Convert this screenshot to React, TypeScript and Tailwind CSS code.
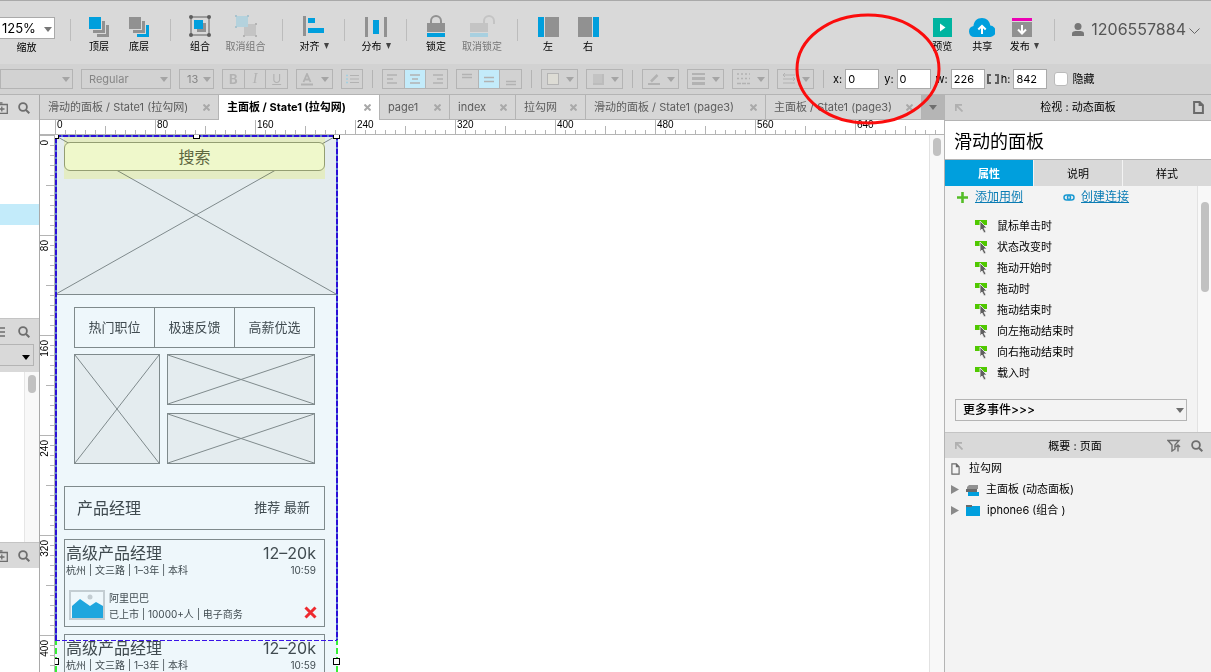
/**
 * Prototype editor workspace
 */
import type { ReactNode } from 'react';
import clsx from 'clsx';

const INK = '#919191';
const BLUE = '#009fdd';

/* ---------- shared bits ---------- */

function Caret({ className }: { className?: string }) {
  return (
    <svg width="8" height="5" viewBox="0 0 8 5" preserveAspectRatio="none" className={className} aria-hidden="true">
      <path d="M0 0h8L4 5z" fill="currentColor" />
    </svg>
  );
}

function SearchIcon() {
  return (
    <svg width="12" height="12" viewBox="0 0 12 12" aria-hidden="true">
      <circle cx="5" cy="5" r="3.9" fill="none" stroke="#6e6e6e" strokeWidth="1.8" />
      <path d="M8 8l3.3 3.3" stroke="#6e6e6e" strokeWidth="2" />
    </svg>
  );
}

function AddFolderIcon() {
  return (
    <svg width="8" height="12" viewBox="0 0 8 12" aria-hidden="true">
      <path d="M0 .8h2.5M0 2.5h7.3v8.8H0M0 7h4.5M1.8 4.5v5" fill="none" stroke="#6e6e6e" strokeWidth="1.3" />
    </svg>
  );
}

function CornerArrow() {
  return (
    <svg width="8" height="8" viewBox="0 0 8 8" aria-hidden="true">
      <path d="M.8 7V.8H7M1 1l6.5 6.5" fill="none" stroke="#b0b0b0" strokeWidth="1.8" />
    </svg>
  );
}

function FileIcon({ width, height, stroke }: { width: number; height: number; stroke: number }) {
  return (
    <svg width={width} height={height} viewBox="0 0 10 13" preserveAspectRatio="none" aria-hidden="true">
      <path d="M1 1h5l3 3v8H1zM6 1v3h3" fill="none" stroke="#6a6a6a" strokeWidth={stroke} />
    </svg>
  );
}

/* ---------- main toolbar ---------- */

function ToolButton({
  label,
  width,
  icon,
  muted,
  menu,
}: {
  label: string;
  width: string;
  icon: ReactNode;
  muted?: boolean;
  menu?: boolean;
}) {
  return (
    <button type="button" className={clsx('flex shrink-0 flex-col items-center whitespace-nowrap', width)}>
      <span className="flex h-[25px] items-end">{icon}</span>
      <span className={clsx('mt-px flex h-4 items-center gap-1 text-[10px] leading-4', muted ? 'text-[#777]' : 'text-black')}>
        {label}
        {menu && <Caret className="h-[6px] w-[5px] text-[#444]" />}
      </span>
    </button>
  );
}

function ToolDivider({ width }: { width: string }) {
  return (
    <div className={clsx('flex shrink-0 justify-center', width)}>
      <div className="mt-[7px] h-[22px] w-px bg-[#bcbcbc]" />
    </div>
  );
}

function LayersIcon({ front, back }: { front: string; back: string }) {
  return (
    <svg width="20" height="20" viewBox="0 0 20 20">
      <path d="M0 0h12v12H0z" fill={front} />
      <path d="M13 4h3v12H4v-3h9z" fill={INK} />
      <path d="M17 8h3v12H8v-3h9z" fill={back} />
    </svg>
  );
}

const groupIcon = (
  <svg width="22" height="22" viewBox="0 0 22 22">
    <path d="M2 2h18v18H2z" fill="none" stroke="#5e5e5e" />
    <path d="M8 8h9v9H8z" fill={INK} />
    <path d="M5 5h9v9H5z" fill={BLUE} />
    <g fill="#5e5e5e">
      <circle cx="2" cy="2" r="2" />
      <circle cx="20" cy="2" r="2" />
      <circle cx="2" cy="20" r="2" />
      <circle cx="20" cy="20" r="2" />
    </g>
  </svg>
);

const ungroupIcon = (
  <svg width="22" height="22" viewBox="0 0 22 22">
    <path d="M9 9h12v12H9z" fill="#c4c4c4" />
    <path d="M1 1h12v11H1z" fill="#b4d2dd" />
    <path d="M0 0h2v2H0zM12 0h2v2h-2zM0 11h2v2H0z" fill="#a9c3cd" />
    <path d="M20 8h2v2h-2zM8 20h2v2H8zM20 20h2v2h-2z" fill="#b3b3b3" />
  </svg>
);

const alignIcon = (
  <svg width="22" height="21" viewBox="0 0 22 21">
    <path d="M0 0h3v20H0z" fill={INK} />
    <path d="M5 2h7v5H5zM5 12h16v5H5z" fill={BLUE} />
  </svg>
);

const distributeIcon = (
  <svg width="22" height="20" viewBox="0 0 22 20">
    <path d="M0 0h3v20H0zM19 0h3v20h-3z" fill={INK} />
    <path d="M8 3h6v14H8z" fill={BLUE} />
  </svg>
);

const lockIcon = (
  <svg width="18" height="22" viewBox="0 0 18 22">
    <path d="M4 9V6a5 5 0 0 1 10 0v3" fill="none" stroke={INK} strokeWidth="2" />
    <path d="M0 8h18v9H0z" fill={INK} />
    <path d="M0 18h18v4H0z" fill={BLUE} />
  </svg>
);

const unlockIcon = (
  <svg width="25" height="22" viewBox="0 0 25 22">
    <path d="M14 9V6a5 5 0 0 1 10 0v3" fill="none" stroke="#c4c4c4" strokeWidth="2" />
    <path d="M0 8h18v9H0z" fill="#c4c4c4" />
    <path d="M0 18h18v4H0z" fill="#a8d0e0" />
  </svg>
);

function MainToolbar() {
  return (
    <div className="flex h-16 shrink-0 border-t border-[#a9a9a9] bg-[#d9d9d9] pt-[11px]">
      <div className="w-[60px] shrink-0">
        <div className="relative mt-[5px] h-[22px] w-[55px]">
          <select
            id="zoom"
            className="block h-full w-full appearance-none border border-l-0 border-[#aaa] bg-white pl-0.5 text-[13px] leading-5"
          >
            <option>125%</option>
          </select>
          <Caret className="pointer-events-none absolute top-[10px] right-[3px] text-[#777]" />
        </div>
        <label htmlFor="zoom" className="block w-[53px] text-center text-[10px] leading-4">
          缩放
        </label>
      </div>
      <ToolDivider width="w-5" />
      <ToolButton label="顶层" width="w-[38px]" icon={<LayersIcon front={BLUE} back={INK} />} />
      <ToolButton label="底层" width="w-[42px]" icon={<LayersIcon front={INK} back={BLUE} />} />
      <ToolDivider width="w-5" />
      <ToolButton label="组合" width="w-10" icon={groupIcon} />
      <ToolButton label="取消组合" width="w-[51px]" icon={ungroupIcon} muted />
      <ToolDivider width="w-[23px]" />
      <ToolButton label="对齐" width="w-10" icon={alignIcon} menu />
      <ToolDivider width="w-5" />
      <ToolButton label="分布" width="w-11" icon={distributeIcon} menu />
      <ToolDivider width="w-4" />
      <ToolButton label="锁定" width="w-11" icon={lockIcon} />
      <ToolButton label="取消锁定" width="w-12" icon={unlockIcon} muted />
      <ToolDivider width="w-[22px]" />
      <ToolButton
        label="左"
        width="w-10"
        icon={
          <svg width="21" height="20" viewBox="0 0 21 20">
            <path d="M0 0h6v20H0z" fill={BLUE} />
            <path d="M7 0h14v20H7z" fill={INK} />
          </svg>
        }
      />
      <ToolButton
        label="右"
        width="w-10"
        icon={
          <svg width="21" height="20" viewBox="0 0 21 20">
            <path d="M15 0h6v20h-6z" fill={BLUE} />
            <path d="M0 0h14v20H0z" fill={INK} />
          </svg>
        }
      />

      <div className="ml-auto flex">
        <ToolButton
          label="预览"
          width="w-10"
          icon={
            <svg width="19" height="19" viewBox="0 0 19 19">
              <path d="M0 0h19v19H0z" fill="#00b4a0" />
              <path d="M7 5.5l5.5 4L7 13.5z" fill="#fff" />
            </svg>
          }
        />
        <ToolButton
          label="共享"
          width="w-10"
          icon={
            <svg width="26" height="19" viewBox="0 0 26 19">
              <path d="M5.5 19a5.5 5.5 0 0 1-1-10.9C4.6 3.5 8 0 13 0c4.4 0 7.8 3 8.300 7.600A5.700 5.700 0 0 1 20.500 19z" fill={BLUE} />
              <path d="M13 16V8.500M9.300 11.500L13 7.800l3.700 3.700" fill="none" stroke="#fff" strokeWidth="2" />
            </svg>
          }
        />
        <ToolButton
          label="发布"
          width="w-11"
          menu
          icon={
            <svg width="20" height="19" viewBox="0 0 20 19" className="mr-1">
              <path d="M0 0h20v3H0z" fill="#ec00b4" />
              <path d="M0 4h20v15H0z" fill={INK} />
              <path d="M10 7v8M6 11.500l4 4 4-4" fill="none" stroke="#fff" strokeWidth="2" />
            </svg>
          }
        />
        <ToolDivider width="w-4" />
        <button type="button" className="mr-[11px] ml-2.5 flex h-[34px] items-center text-base text-[#555]">
          <svg width="12" height="13" viewBox="0 0 12 13" className="mr-[7px]">
            <circle cx="6" cy="3.500" r="3.500" fill="#777" />
            <path d="M0 13v-2.500C0 8.500 2 8 6 8s6 .5 6 2.500V13z" fill="#777" />
          </svg>
          1206557884
          <svg width="11" height="6" viewBox="0 0 11 6" className="mt-1 ml-[3px]">
            <path d="M.5.5l5 5 5-5" fill="none" stroke="#666" />
          </svg>
        </button>
      </div>
    </div>
  );
}

/* ---------- format toolbar ---------- */

function FadedSelect({ label, value, width }: { label: string; value: string; width: string }) {
  return (
    <div className={clsx('relative h-5 shrink-0', width)}>
      <select
        aria-label={label}
        className="block h-full w-full appearance-none border border-[#b4b4b4] pl-[7px] text-[11px] leading-4 text-[#858585]"
      >
        <option>{value}</option>
      </select>
      <Caret className="pointer-events-none absolute top-2 right-[3px] text-[#a5a5a5]" />
    </div>
  );
}

function MenuButton({ label, children }: { label: string; children: ReactNode }) {
  return (
    <button
      type="button"
      aria-label={label}
      className="flex h-5 w-[37px] shrink-0 items-center justify-between border border-[#b4b4b4] pr-[3px] pl-1 text-[#b2b2b2]"
    >
      {children}
      <Caret className="text-[#a5a5a5]" />
    </button>
  );
}

function Segment({ items, active }: { items: { label: string; icon: ReactNode }[]; active?: number }) {
  return (
    <div className="flex h-5 w-[66px] shrink-0 divide-x divide-[#b4b4b4] border border-[#b4b4b4] text-[#b2b2b2]">
      {items.map((item, i) => (
        <button
          key={item.label}
          type="button"
          aria-label={item.label}
          className={clsx('flex flex-1 items-center justify-center', i === active && 'bg-[#c3ebfa]')}
        >
          {item.icon}
        </button>
      ))}
    </div>
  );
}

function Strokes({ d }: { d: string }) {
  return (
    <svg width="14" height="14" viewBox="0 0 14 14" aria-hidden="true">
      <path d={d} fill="none" stroke="currentColor" strokeWidth="1.5" />
    </svg>
  );
}

function FormatDivider() {
  return <div className="mx-px h-[18px] w-px shrink-0 bg-[#b4b4b4]" />;
}

function Coordinate({ name, value }: { name: string; value: string }) {
  return (
    <label className="flex shrink-0 items-center gap-[3px] text-[11px]">
      {name}:
      <input defaultValue={value} className="h-5 w-[34px] border border-[#aaa] bg-white pl-0.5 text-[11px] outline-none" />
    </label>
  );
}

function FormatToolbar() {
  return (
    <div className="flex h-[31px] shrink-0 items-center gap-2 border-b border-[#b4b4b4] bg-[#d2d2d2]">
      <FadedSelect label="字体" value="" width="w-[73px]" />
      <FadedSelect label="字重" value="Regular" width="w-[90px]" />
      <FadedSelect label="字号" value="13" width="w-[35px]" />
      <Segment
        items={[
          { label: '粗体', icon: <span className="text-[13px] leading-4 font-bold">B</span> },
          { label: '斜体', icon: <span className="font-['Liberation_Serif',serif] text-sm leading-4 italic">I</span> },
          { label: '下划线', icon: <span className="text-xs leading-4 underline">U</span> },
        ]}
      />
      <MenuButton label="文字颜色">
        <svg width="13" height="13" viewBox="0 0 13 13">
          <path d="M2.500 9l3.500-8 3.500 8M4 6.500h4" fill="none" stroke="currentColor" strokeWidth="1.800" />
          <path d="M0 10.500h12v2H0z" fill="currentColor" />
        </svg>
      </MenuButton>
      <button
        type="button"
        aria-label="项目符号"
        className="flex h-5 w-[22px] shrink-0 items-center justify-center border border-[#b4b4b4] text-[#b2b2b2]"
      >
        <svg width="13" height="10" viewBox="0 0 13 10">
          <path d="M4 1.500h9M4 5h9M4 8.500h9" stroke="currentColor" />
          <path d="M0 1.500h2M0 5h2M0 8.500h2" stroke="#a3cfe0" strokeWidth="1.500" />
        </svg>
      </button>
      <FormatDivider />
      <Segment
        active={1}
        items={[
          { label: '左对齐', icon: <Strokes d="M1 3h10M1 7h6M1 11h10" /> },
          { label: '居中', icon: <Strokes d="M2 3h10M4 7h6M2 11h10" /> },
          { label: '右对齐', icon: <Strokes d="M3 3h10M7 7h6M3 11h10" /> },
        ]}
      />
      <Segment
        active={1}
        items={[
          { label: '顶部', icon: <Strokes d="M2 2.500h10M2 5.500h10" /> },
          { label: '中部', icon: <Strokes d="M2 5.500h10M2 9.500h10" /> },
          { label: '底部', icon: <Strokes d="M2 9.500h10M2 12.500h10" /> },
        ]}
      />
      <FormatDivider />
      <MenuButton label="填充">
        <span className="ml-px size-3 border border-[#b4b4b4] bg-[#dddcd5]" />
      </MenuButton>
      <MenuButton label="阴影">
        <span className="ml-0.5 size-[11px] border-r-2 border-b-2 border-[#bcbcbc] bg-[#c3c3c3]" />
      </MenuButton>
      <FormatDivider />
      <MenuButton label="线条颜色">
        <svg width="14" height="14" viewBox="0 0 14 14">
          <path d="M1 12h12" stroke="currentColor" strokeWidth="2" />
          <path d="M4 9.500L10.500 3" stroke="currentColor" strokeWidth="2.500" />
        </svg>
      </MenuButton>
      <MenuButton label="线宽">
        <svg width="13" height="12" viewBox="0 0 13 12">
          <path d="M0 0h13v2H0zM0 4h13v3H0zM0 9h13v3H0z" fill="currentColor" />
        </svg>
      </MenuButton>
      <MenuButton label="线型">
        <svg width="13" height="12" viewBox="0 0 13 12">
          <path d="M0 1h13M0 5.500h13" stroke="currentColor" strokeWidth="1.500" strokeDasharray="2 2" />
          <path d="M0 10.500h13" stroke="currentColor" strokeWidth="1.500" strokeDasharray="4 1" />
        </svg>
      </MenuButton>
      <MenuButton label="箭头">
        <svg width="14" height="14" viewBox="0 0 14 14">
          <path d="M1 3h12M1 7h12M1 11h12M3 1L1 3l2 2M11 5l2 2-2 2" fill="none" stroke="currentColor" />
        </svg>
      </MenuButton>
      <FormatDivider />
      <div className="flex items-center gap-[5px]">
        <Coordinate name="x" value="0" />
        <Coordinate name="y" value="0" />
        <Coordinate name="w" value="226" />
        <svg width="12" height="10" viewBox="0 0 12 10" className="-mx-[3px] shrink-0" aria-hidden="true">
          <path d="M4 1H1v8h3M8 1h3v8H8" fill="none" stroke="#5f5f5f" strokeWidth="2" />
        </svg>
        <Coordinate name="h" value="842" />
        <label className="ml-0.5 flex shrink-0 items-center gap-1 text-[11px]">
          <input type="checkbox" className="size-3.5 appearance-none rounded-[3px] border border-[#bbb] bg-white" />
          隐藏
        </label>
      </div>
    </div>
  );
}

/* ---------- left sidebar ---------- */

function LeftSidebar() {
  return (
    <aside className="flex w-10 shrink-0 flex-col border-r border-[#a9a9a9] bg-white">
      <div className="flex h-[25px] items-center gap-2.5 bg-[#d9d9d9]">
        <AddFolderIcon />
        <SearchIcon />
      </div>
      <div className="h-[198px]">
        <div className="mt-[84px] h-[21px] bg-[#c3ebfa]" />
      </div>
      <div className="h-[54px] border-t border-[#c4c4c4] bg-[#d9d9d9]">
        <div className="flex h-[25px] items-center gap-3">
          <svg width="6" height="10" viewBox="0 0 6 10" aria-hidden="true">
            <path d="M0 1h5M0 5h5M0 9h5" stroke="#6e6e6e" strokeWidth="1.500" />
          </svg>
          <SearchIcon />
        </div>
        <div className="relative h-[22px] w-[34px]">
          <select aria-label="元件库" className="block h-full w-full appearance-none border border-l-0 border-[#b4b4b4]">
            <option />
          </select>
          <Caret className="pointer-events-none absolute top-[11px] right-1 text-black" />
        </div>
      </div>
      <div className="flex h-[170px] justify-end">
        <div className="flex w-[15px] justify-center border-l border-[#e6e6e6] bg-[#f8f8f8] pt-[3px]">
          <div className="h-[18px] w-2 rounded-full bg-[#c1c1c1]" />
        </div>
      </div>
      <div className="flex h-[26px] items-center gap-2.5 border-t border-[#c4c4c4] bg-[#d9d9d9]">
        <AddFolderIcon />
        <SearchIcon />
      </div>
    </aside>
  );
}

/* ---------- document tabs and rulers ---------- */

const documents = [
  { title: '滑动的面板 / State1 (拉勾网)', width: 'w-[179px]' },
  { title: '主面板 / State1 (拉勾网)', width: 'w-[161px]', active: true },
  { title: 'page1', width: 'w-[70px]' },
  { title: 'index', width: 'w-[66px]' },
  { title: '拉勾网', width: 'w-[70px]' },
  { title: '滑动的面板 / State1 (page3)', width: 'w-[180px]' },
  { title: '主面板 / State1 (page3)', width: 'w-[156px]' },
];

function DocumentTabs() {
  return (
    <div className="flex h-[25px] shrink-0 overflow-hidden">
      {documents.map((doc) => (
        <button
          key={doc.title}
          type="button"
          className={clsx(
            'flex shrink-0 items-center justify-between border-r border-[#b4b4b4] pr-2 pl-2 text-[11px] whitespace-nowrap',
            doc.width,
            doc.active ? 'bg-white font-bold text-black' : 'border-b bg-[#d6d6d6] text-[#5c5c5c]',
          )}
        >
          {doc.title}
          <svg width="7" height="7" viewBox="0 0 7 7" aria-hidden="true">
            <path d="M.5.5l6 6M6.500.5l-6 6" stroke="#a9a9a9" strokeWidth="2" />
          </svg>
        </button>
      ))}
      <button type="button" aria-label="全部标签" className="flex flex-1 items-center justify-center bg-[#b5b5b5] text-[#6e6e6e]">
        <Caret />
      </button>
    </div>
  );
}

const steps = (count: number) => Array.from({ length: count }, (_, i) => i);
const RULER_FONT = "font-['Liberation_Sans',Arial,sans-serif] text-[10px]";

// ticks every 10px, 125% zoom makes 80 units out of 100px
function HorizontalRuler() {
  return (
    <svg height="15" className="block w-full shrink-0 bg-white" aria-hidden="true">
      {steps(89).map((i) => (
        <path
          key={i}
          d={`M${i * 10 + 15.5} ${i % 10 === 0 ? 0 : i % 5 === 0 ? 6 : 10}V15`}
          stroke="#b4b4b4"
        />
      ))}
      {steps(9).map((i) => (
        <text key={i} x={i * 100 + 17} y="8" className={RULER_FONT}>
          {i * 80}
        </text>
      ))}
      <path d="M0 14.500h2000" stroke="#b4b4b4" />
    </svg>
  );
}

function VerticalRuler() {
  return (
    <svg width="15" className="block h-full shrink-0 bg-white" aria-hidden="true">
      {steps(54).map((i) => (
        <path
          key={i}
          d={`M${i % 10 === 0 ? 0 : i % 5 === 0 ? 6 : 10} ${i * 10 + 0.5}H15`}
          stroke="#b4b4b4"
        />
      ))}
      {steps(6).map((i) => (
        <text
          key={i}
          transform={`translate(8 ${i * 100 + 5}) rotate(-90)`}
          textAnchor="end"
          className={RULER_FONT}
        >
          {i * 80}
        </text>
      ))}
      <path d="M14.500 0v2000" stroke="#b4b4b4" />
    </svg>
  );
}

/* ---------- canvas ---------- */

function Placeholder({ className }: { className: string }) {
  return (
    <svg className={clsx('absolute border border-[#7f8a8c] bg-[#e4ecef]', className)} aria-hidden="true">
      <line x1="0" y1="0" x2="100%" y2="100%" stroke="#7f8a8c" />
      <line x1="100%" y1="0" x2="0" y2="100%" stroke="#7f8a8c" />
    </svg>
  );
}

function Handle({ className }: { className: string }) {
  return <div className={clsx('absolute size-[7px] border border-black bg-white', className)} />;
}

function JobCard({ className }: { className: string }) {
  return (
    <div className={clsx('absolute left-[9px] h-[88px] w-[261px] border border-[#7f8a8c] pt-[3px] pr-2 pl-px', className)}>
      <div className="flex justify-between text-base leading-5">
        <span>高级产品经理</span>
        <span>12–20k</span>
      </div>
      <div className="flex justify-between text-[10px] leading-[14px]">
        <span>杭州 | 文三路 | 1–3年 | 本科</span>
        <span>10:59</span>
      </div>
      <div className="mt-[13px] flex text-[10px]">
        <svg width="36" height="30" viewBox="0 0 36 30" className="mr-1 ml-[3px]" aria-hidden="true">
          <path d="M1 1h34v28H1z" fill="#eef7fb" stroke="#c3cdd2" strokeWidth="2" />
          <circle cx="21" cy="7" r="2.500" fill="#c3cdd2" />
          <path d="M3 16l8-7 10 7 6-4 7 4v12H3z" fill="#1fa6de" />
        </svg>
        <div className="leading-4">
          <p>阿里巴巴</p>
          <p>已上市 | 10000+人 | 电子商务</p>
        </div>
        <svg width="13" height="13" viewBox="0 0 13 13" className="mt-4 -mr-px ml-auto" aria-hidden="true">
          <path d="M1.500 1.500l10 10M11.500 1.500l-10 10" stroke="#ee2a2f" strokeWidth="3" />
        </svg>
      </div>
    </div>
  );
}

function Canvas() {
  return (
    <div className="relative flex-1 overflow-hidden bg-white">
      <div className="absolute top-0 left-0 h-full w-[282px] bg-[#eef7fb] text-[#404b50]">
        <Placeholder className="top-0 left-0 h-[160px] w-[282px]" />
        <div className="absolute top-0.5 left-[9px] h-[42px] w-[261px] bg-[#ffffd0] mix-blend-multiply" />
        <div className="absolute top-[7px] left-[9px] flex h-[29px] w-[261px] items-center justify-center rounded-md border border-[#949e72] bg-[#eff8cb] text-base leading-5 text-[#5d663f]">
          搜索
        </div>

        <div className="absolute top-[172px] left-[19px] flex h-[41px] w-[241px] divide-x divide-[#7f8a8c] border border-[#7f8a8c] text-[13px]">
          {['热门职位', '极速反馈', '高薪优选'].map((name) => (
            <span key={name} className="flex flex-1 items-center justify-center">
              {name}
            </span>
          ))}
        </div>
        <Placeholder className="top-[219px] left-[19px] h-[110px] w-[86px]" />
        <Placeholder className="top-[219px] left-[112px] h-[51px] w-[148px]" />
        <Placeholder className="top-[278px] left-[112px] h-[51px] w-[148px]" />

        <div className="absolute top-[351px] left-[9px] flex h-11 w-[261px] items-center justify-between border border-[#7f8a8c] pr-3.5 pl-3">
          <span className="text-base leading-5">产品经理</span>
          <span className="text-[13px]">推荐 最新</span>
        </div>
        <JobCard className="top-[404px]" />
        <JobCard className="top-[499px]" />
      </div>

      {/* selection outlines */}
      <svg className="absolute top-0 left-0 h-full w-[290px]" aria-hidden="true">
        <path d="M1 0v1000M282 0v1000" stroke="#35f035" strokeWidth="2" strokeDasharray="6 3" />
        <path d="M1 505V1h281v504" fill="none" stroke="#5a7ad8" strokeWidth="2" />
        <path d="M1 505V1h281v504" fill="none" stroke="#2a10d8" strokeWidth="2" strokeDasharray="5 2" />
        <path d="M0 505.500h282" stroke="#3a12e8" strokeDasharray="5 2" />
      </svg>
      <Handle className="-top-[3px] -left-[3px]" />
      <Handle className="-top-[3px] left-[138px]" />
      <Handle className="-top-[3px] left-[278px]" />
      <Handle className="top-[523px] -left-[3px]" />
      <Handle className="top-[523px] left-[278px]" />
    </div>
  );
}

/* ---------- inspector ---------- */

const events = ['鼠标单击时', '状态改变时', '拖动开始时', '拖动时', '拖动结束时', '向左拖动结束时', '向右拖动结束时', '载入时'];

function EventIcon() {
  return (
    <svg width="13" height="13" viewBox="0 0 13 13" aria-hidden="true">
      <path d="M0 0h12v5H0z" fill="#50c800" />
      <path d="M5 1l7 7H9l2 4-2 1-2-4-2 2z" fill="#5f5f5f" stroke="#f3f3f3" strokeWidth=".8" />
    </svg>
  );
}

function Inspector() {
  return (
    <aside className="flex w-[267px] shrink-0 flex-col border-l border-[#b4b4b4] bg-[#f3f3f3] text-[11px]">
      <header className="flex h-[26px] shrink-0 items-center justify-between border-b border-[#b4b4b4] bg-[#d2d2d2] pr-[7px] pl-2.5">
        <CornerArrow />
        <h2>检视 : 动态面板</h2>
        <FileIcon width={11} height={13} stroke={1.8} />
      </header>
      <input
        aria-label="名称"
        defaultValue="滑动的面板"
        className="h-[39px] shrink-0 border-b border-[#b4b4b4] bg-white px-[9px] text-lg outline-none"
      />
      <div className="grid h-[26px] shrink-0 grid-cols-3 gap-px">
        {['属性', '说明', '样式'].map((name, i) => (
          <button
            key={name}
            type="button"
            className={clsx('pt-0.5', i === 0 ? 'bg-[#009fdd] font-semibold text-white' : 'bg-[#d9d9d9]')}
          >
            {name}
          </button>
        ))}
      </div>

      <div className="flex h-[246px] shrink-0">
        <div className="flex-1">
          <div className="flex h-[22px] items-center pl-3 text-xs text-[#0a7cb4]">
            <svg width="11" height="11" viewBox="0 0 11 11" className="mr-[7px]" aria-hidden="true">
              <path d="M5.500 0v11M0 5.500h11" stroke="#54bd27" strokeWidth="2.600" />
            </svg>
            <a href="#add-case" className="underline">
              添加用例
            </a>
            <svg width="12" height="7" viewBox="0 0 12 7" className="mr-1.5 ml-10" aria-hidden="true">
              <rect x="1" y="1" width="6.500" height="5" rx="2.500" fill="none" stroke="#1d9ad2" strokeWidth="1.500" />
              <rect x="4.500" y="1" width="6.500" height="5" rx="2.500" fill="none" stroke="#1d9ad2" strokeWidth="1.500" />
            </svg>
            <a href="#create-link" className="underline">
              创建连接
            </a>
          </div>
          <ul className="mt-2 pl-[30px]">
            {events.map((name) => (
              <li key={name} className="flex h-[21px] items-center gap-[9px]">
                <EventIcon />
                {name}
              </li>
            ))}
          </ul>
          <div className="relative mt-[15px] mr-2.5 ml-2.5 h-[22px]">
            <select
              aria-label="更多事件"
              className="block h-full w-full appearance-none border border-[#b4b4b4] pl-[7px] text-xs leading-5 font-medium"
            >
              <option>更多事件&gt;&gt;&gt;</option>
            </select>
            <Caret className="pointer-events-none absolute top-[9px] right-[3px] text-[#6e6e6e]" />
          </div>
        </div>
        <div className="flex w-3.5 justify-center border-l border-[#e2e2e2] bg-[#f8f8f8] pt-4">
          <div className="h-[90px] w-2 rounded-full bg-[#c1c1c1]" />
        </div>
      </div>

      <header className="flex h-[26px] shrink-0 items-center border-t border-[#c4c4c4] bg-[#d9d9d9] pr-2 pl-2.5">
        <CornerArrow />
        <h2 className="flex-1 pt-0.5 pl-5 text-center">概要 : 页面</h2>
        <svg width="14" height="13" viewBox="0 0 14 13" className="mr-2.5" aria-hidden="true">
          <path d="M1 1.500h11L8 6v4l-3 2V6zM11 12.500V6M9 8l2-2 2 2" fill="none" stroke="#6e6e6e" strokeWidth="1.400" />
        </svg>
        <SearchIcon />
      </header>
      <ul>
        <li className="flex h-[21px] items-center gap-[9px] pl-1.5">
          <FileIcon width={9} height={12} stroke={1.3} />
          拉勾网
        </li>
        <li className="flex h-[21px] items-center gap-[7px] pl-1.5">
          <svg width="8" height="9" viewBox="0 0 8 9" aria-hidden="true">
            <path d="M0 0l8 4.500L0 9z" fill="#8a8a8a" />
          </svg>
          <svg width="13" height="12" viewBox="0 0 13 12" aria-hidden="true">
            <path d="M1 3l2-2h9v4H1z" fill={INK} />
            <path d="M0 5h11v3H0z" fill="#6a6a6a" />
            <path d="M2 8h11v4H2z" fill={BLUE} />
          </svg>
          主面板 (动态面板)
        </li>
        <li className="flex h-[21px] items-center gap-[7px] pl-1.5">
          <svg width="8" height="9" viewBox="0 0 8 9" aria-hidden="true">
            <path d="M0 0l8 4.500L0 9z" fill="#8a8a8a" />
          </svg>
          <svg width="14" height="11" viewBox="0 0 14 11" aria-hidden="true">
            <path d="M0 1h14v10H0z" fill={BLUE} />
            <path d="M0 0h6v2H0z" fill="#6a6a6a" />
          </svg>
          iphone6 (组合 )
        </li>
      </ul>
    </aside>
  );
}

export default function App() {
  return (
    <div className="relative flex h-screen w-full flex-col overflow-hidden bg-white font-[Inter,'Noto_Sans_CJK_SC',sans-serif] text-black">
      <MainToolbar />
      <FormatToolbar />
      <div className="flex min-h-0 flex-1">
        <LeftSidebar />
        <main className="flex min-w-0 flex-1 flex-col">
          <DocumentTabs />
          <HorizontalRuler />
          <div className="flex min-h-0 flex-1">
            <VerticalRuler />
            <Canvas />
            <div className="flex w-[15px] shrink-0 justify-center border-l border-[#e2e2e2] bg-[#f8f8f8] pt-[3px]">
              <div className="h-[18px] w-2 rounded-full bg-[#c1c1c1]" />
            </div>
          </div>
        </main>
        <Inspector />
      </div>

      {/* callout around the position fields */}
      <svg width="148" height="112" viewBox="0 0 148 112" className="pointer-events-none absolute top-[13px] left-[794px]" aria-hidden="true">
        <ellipse cx="74" cy="56" rx="71" ry="54" fill="none" stroke="#fb0d0d" strokeWidth="3" />
      </svg>
    </div>
  );
}
